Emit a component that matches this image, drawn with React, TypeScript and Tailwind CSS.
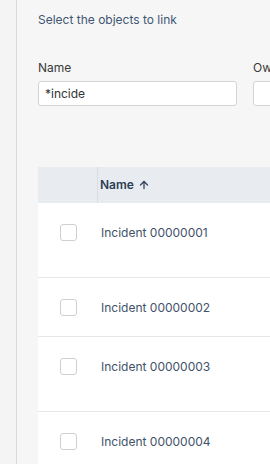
import { ArrowUp } from "lucide-react";

type Row = { id: string; name: string; height: string };

const rows: Row[] = [
  { id: "1", name: "Incident 00000001", height: "h-[75px]" },
  { id: "2", name: "Incident 00000002", height: "h-[59px]" },
  { id: "3", name: "Incident 00000003", height: "h-[75px]" },
  { id: "4", name: "Incident 00000004", height: "h-[75px]" },
];

export default function App() {
  return (
    <div className="flex h-[464px] w-[270px] overflow-hidden bg-[#f6f6f6] font-['Inter',sans-serif] text-[12px] text-[#3d5069]">
      <div className="w-[17px] shrink-0 border-r border-[#dadada] bg-[#f4f4f4]" />
      <div className="min-w-0 flex-1 pl-[21px]">
        <p className="mt-[12px] leading-4 text-[#3f5674]">Select the objects to link</p>

        <div className="mt-[32px] flex gap-[16px]">
          <div className="w-[199px] shrink-0">
            <label className="block leading-4 text-[#3a3a3a]">Name</label>
            <div className="mt-[5px] flex h-[25px] items-center rounded-[3px] border border-[#d4d4d4] bg-white px-[6px] text-[#333]">
              *incide
            </div>
          </div>
          <div className="w-[199px] shrink-0">
            <label className="block leading-4 text-[#3a3a3a]">Owner</label>
            <div className="mt-[5px] h-[25px] rounded-[3px] border border-[#d4d4d4] bg-white" />
          </div>
        </div>

        <div className="mt-[61px] w-[400px]">
          <div className="flex h-[36px] bg-[#e8ecf1]">
            <div className="w-[60px] shrink-0 border-r border-[#d8dde4]" />
            <div className="flex items-center gap-[4px] pl-[2px] font-semibold text-[#2b3d55]">
              Name
              <ArrowUp className="h-[12px] w-[12px]" strokeWidth={2.5} />
            </div>
          </div>
          {rows.map((row) => (
            <div key={row.id} className={`flex border-b border-[#e6e6e6] bg-white ${row.height}`}>
              <div className="flex w-[61px] shrink-0 justify-center pt-[21px]">
                <div className="h-[17px] w-[17px] rounded-[3px] border border-[#cfcfcf] bg-white" />
              </div>
              <div className="pl-[2px] pt-[22px] leading-4 text-[#3f5269]">{row.name}</div>
            </div>
          ))}
        </div>
      </div>
    </div>
  );
}
